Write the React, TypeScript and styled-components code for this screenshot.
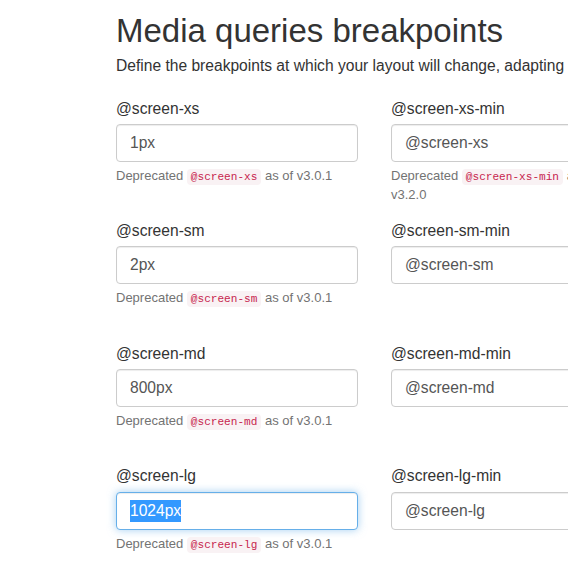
import styled, {createGlobalStyle} from "styled-components";

const GlobalStyle = createGlobalStyle`
  html, body {
    margin: 0;
    padding: 0;
    background: #fff;
    overflow: hidden;
  }
  body {
    font-family: "Liberation Sans", Arial, sans-serif;
    font-size: 15.6px;
    line-height: 1.43;
    color: #333;
  }
`

const Page = styled.div`
  width: 568px;
  height: 568px;
  overflow: hidden;
  padding-left: 116px;
  box-sizing: border-box;
`

const Title = styled.h2`
  margin: 13px 0 0 0;
  font-size: 33px;
  font-weight: 400;
  line-height: 1.1;
  color: #333;
  white-space: nowrap;
`

const Lead = styled.p`
  margin: 6px 0 0 0;
  font-size: 15.6px;
  white-space: nowrap;
`

const Rows = styled.div`
  margin-top: 20px;
  display: flex;
  flex-direction: column;
`

const Row = styled.div`
  display: grid;
  grid-template-columns: 242px 242px;
  column-gap: 33px;
  height: 122.6px;
`

const Group = styled.div`
  display: flex;
  flex-direction: column;
`

const Label = styled.label`
  display: block;
  margin-bottom: 4px;
  white-space: nowrap;
`

const InputBox = styled.div<{ $focused?: boolean }>`
  box-sizing: border-box;
  height: 38px;
  padding: 0 13px;
  display: flex;
  align-items: center;
  font-size: 15.6px;
  color: #555;
  border: 1px solid ${p => p.$focused ? "#66afe9" : "#ccc"};
  border-radius: 4px;
  background: #fff;
  box-shadow: ${p => p.$focused
    ? "inset 0 1px 1px rgba(0,0,0,.075), 0 0 8px rgba(102,175,233,.6)"
    : "inset 0 1px 1px rgba(0,0,0,.075)"};
  white-space: nowrap;
`

const Selected = styled.span`
  background: #3399ff;
  color: #fff;
`

const Help = styled.div`
  margin-top: 5px;
  font-size: 13px;
  line-height: 18px;
  color: #737373;
`

const Code = styled.code`
  font-family: "Liberation Mono", "DejaVu Sans Mono", monospace;
  font-size: 11.1px;
  padding: 2px 4px;
  color: #c7254e;
  background: #f9f2f4;
  border-radius: 4px;
`

type Field = {
    name: string
    value: string
    deprecated?: string
    focused?: boolean
}

const rows: Field[][] = [
    [
        {name: "@screen-xs", value: "1px", deprecated: "v3.0.1"},
        {name: "@screen-xs-min", value: "@screen-xs", deprecated: "v3.2.0"},
    ],
    [
        {name: "@screen-sm", value: "2px", deprecated: "v3.0.1"},
        {name: "@screen-sm-min", value: "@screen-sm"},
    ],
    [
        {name: "@screen-md", value: "800px", deprecated: "v3.0.1"},
        {name: "@screen-md-min", value: "@screen-md"},
    ],
    [
        {name: "@screen-lg", value: "1024px", deprecated: "v3.0.1", focused: true},
        {name: "@screen-lg-min", value: "@screen-lg"},
    ],
]

const App = () => {
    return (
        <>
            <GlobalStyle/>
            <Page>
                <Title>Media queries breakpoints</Title>
                <Lead>Define the breakpoints at which your layout will change, adapting</Lead>
                <Rows>
                    {rows.map((row, i) => (
                        <Row key={i}>
                            {row.map(f => (
                                <Group key={f.name}>
                                    <Label>{f.name}</Label>
                                    <InputBox $focused={f.focused}>
                                        {f.focused ? <Selected>{f.value}</Selected> : f.value}
                                    </InputBox>
                                    {f.deprecated && (
                                        <Help>Deprecated <Code>{f.name}</Code> as of {f.deprecated}</Help>
                                    )}
                                </Group>
                            ))}
                        </Row>
                    ))}
                </Rows>
            </Page>
        </>
    )
}

export default App
